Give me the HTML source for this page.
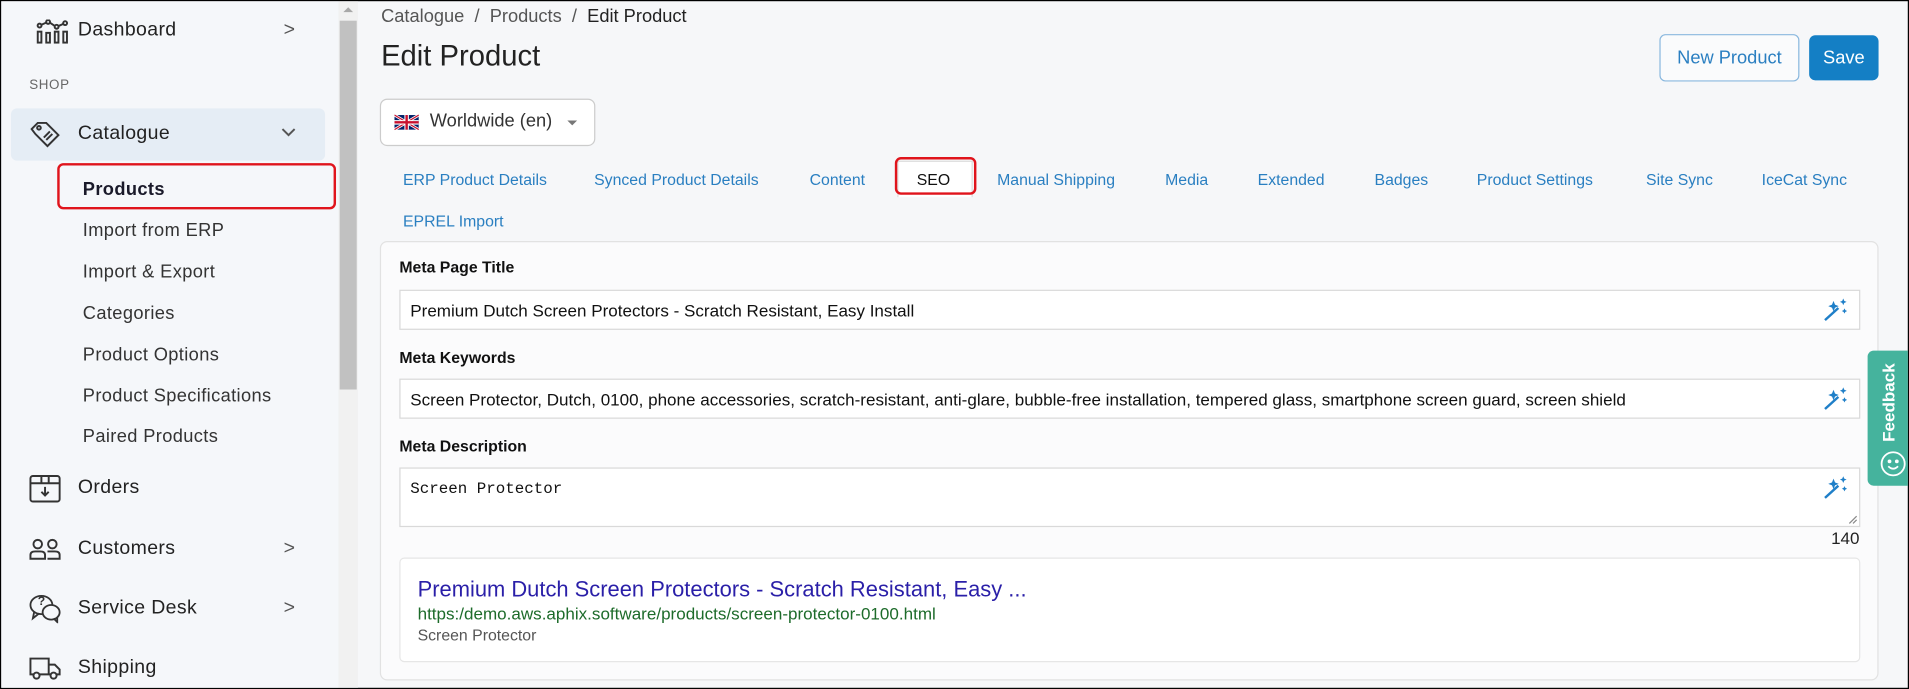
<!DOCTYPE html>
<html><head><meta charset="utf-8"><style>
*{box-sizing:border-box;margin:0;padding:0}
html,body{width:1909px;height:689px;overflow:hidden;background:#f6f7f9}
#w{position:absolute;left:0;top:0;width:1568px;height:566px;transform:scale(1.21747,1.2173);transform-origin:0 0;font-family:"Liberation Sans",sans-serif;background:#f6f7f9;border:1px solid #000;overflow:hidden}
.a{position:absolute;white-space:nowrap}
.side{position:absolute;left:0;top:0;width:277px;height:566px;background:#f5f7fa}
.nav{font-size:16px;color:#222;letter-spacing:.3px}
.sub{font-size:15px;color:#333;left:67px;letter-spacing:.3px}
.chev{font-size:16px;color:#555}
.tab{font-size:13px;color:#2a7fc1;top:139px}
.lbl{font-size:13px;font-weight:bold;color:#111;left:327px}
.inp{position:absolute;left:327px;width:1200px;background:#fff;border:1px solid #d9d9d9}
.inp span{position:absolute;left:8px;font-size:14px;color:#111;white-space:nowrap}
.wand{position:absolute;right:8px;top:6px}
</style></head><body><div id="w">
<div class="side"></div>
<div class="a" style="left:277px;top:0;width:16px;height:566px;background:#f1f1f1"></div>
<div class="a" style="left:278px;top:16px;width:14px;height:303px;background:#c1c1c1"></div>
<div class="a" style="left:281px;top:5px;width:0;height:0;border-left:4px solid transparent;border-right:4px solid transparent;border-bottom:4px solid #a8a8a8"></div>

<svg class="a" style="left:29px;top:15px" width="26" height="20" viewBox="0 0 26 20" fill="none" stroke="#333" stroke-width="1.6"><rect x="1" y="10" width="3" height="9"/><rect x="8" y="11" width="3" height="8"/><rect x="15" y="10" width="3" height="9"/><rect x="22" y="10" width="3" height="9"/><circle cx="2.5" cy="5" r="1.6"/><circle cx="9.5" cy="2" r="1.6"/><circle cx="16.5" cy="6" r="1.6"/><circle cx="23.5" cy="3" r="1.6"/><path d="M4 4.3L8 2.6M11 2.6L15 5.3M18 5.4L22 3.6"/></svg>
<div class="a nav" style="left:63px;top:15px">Dashboard</div>
<div class="a chev" style="left:232px;top:15px">&gt;</div>
<div class="a" style="left:23px;top:63px;font-size:11px;color:#666;letter-spacing:.5px">SHOP</div>
<div class="a" style="left:8px;top:88px;width:258px;height:43px;background:#e5edf5;border-radius:5px"></div>
<svg class="a" style="left:23px;top:99px" width="26" height="22" viewBox="0 0 26 22" fill="none" stroke="#333" stroke-width="1.6"><path d="M2 6L7 1H14L24 11L15 20L5 10L2 6Z"/><circle cx="8" cy="5" r="1.5"/><path d="M12 13L17 8M14 15L19 10"/></svg>
<div class="a nav" style="left:63px;top:100px">Catalogue</div>
<svg class="a" style="left:230px;top:104px" width="12" height="8" viewBox="0 0 12 8" fill="none" stroke="#555" stroke-width="1.6"><path d="M1 1L6 6L11 1"/></svg>
<div class="a" style="left:46px;top:133px;width:229px;height:38px;border:2px solid #e0141c;border-radius:5px"></div>
<div class="a sub" style="top:146px;font-weight:bold;color:#1a1a2a">Products</div>
<div class="a sub" style="top:180px">Import from ERP</div>
<div class="a sub" style="top:214px">Import &amp; Export</div>
<div class="a sub" style="top:248px">Categories</div>
<div class="a sub" style="top:282px">Product Options</div>
<div class="a sub" style="top:316px">Product Specifications</div>
<div class="a sub" style="top:349px">Paired Products</div>
<svg class="a" style="left:23px;top:389px" width="26" height="24" viewBox="0 0 26 24" fill="none" stroke="#333" stroke-width="1.6"><rect x="1" y="1" width="24" height="21" rx="2"/><path d="M1 7H25M10 1V7M16 1V7M13 10V17M10 14L13 17L16 14"/></svg>
<div class="a nav" style="left:63px;top:391px">Orders</div>
<svg class="a" style="left:23px;top:441px" width="26" height="18" viewBox="0 0 26 18" fill="none" stroke="#333" stroke-width="1.6"><circle cx="7" cy="5" r="3.5"/><circle cx="19" cy="5" r="3.5"/><path d="M1 17V14Q1 11 5 11H9Q13 11 13 14V17ZM15 11H21Q25 11 25 14V17H15"/></svg>
<div class="a nav" style="left:63px;top:441px">Customers</div>
<div class="a chev" style="left:232px;top:441px">&gt;</div>
<svg class="a" style="left:23px;top:487px" width="26" height="24" viewBox="0 0 26 24" fill="none" stroke="#333" stroke-width="1.5"><ellipse cx="10" cy="9" rx="9" ry="7.5"/><path d="M4 15L3 20L8 16"/><ellipse cx="18" cy="15" rx="7" ry="6" fill="#f5f7fa"/><path d="M20 20L23 23V19"/></svg>
<div class="a" style="left:30px;top:488px;font-size:10px;font-weight:bold;color:#333">?</div>
<div class="a nav" style="left:63px;top:490px">Service Desk</div>
<div class="a chev" style="left:232px;top:490px">&gt;</div>
<svg class="a" style="left:23px;top:538px" width="26" height="20" viewBox="0 0 26 20" fill="none" stroke="#333" stroke-width="1.6"><path d="M1 2H16V15H1ZM16 7H21L25 11V15H16"/><circle cx="6" cy="16" r="2.5" fill="#f5f7fa"/><circle cx="20" cy="16" r="2.5" fill="#f5f7fa"/></svg>
<div class="a nav" style="left:63px;top:539px">Shipping</div>

<div class="a" style="left:312px;top:4px;font-size:15px;color:#555">Catalogue &nbsp;/&nbsp; Products &nbsp;/&nbsp; <span style="color:#222">Edit Product</span></div>
<div class="a" style="left:312px;top:32px;font-size:24px;color:#222">Edit Product</div>
<div class="a" style="left:1362px;top:27px;width:115px;height:39px;border:1px solid #8ab8de;border-radius:5px;background:#fafbfc;color:#2a7fc1;font-size:15px;text-align:center;line-height:37px">New Product</div>
<div class="a" style="left:1485px;top:28px;width:57px;height:37px;border-radius:5px;background:#147fc5;color:#fff;font-size:15px;text-align:center;line-height:37px">Save</div>

<div class="a" style="left:311px;top:80px;width:177px;height:39px;border:1px solid #ccc;border-radius:6px;background:#fff"></div>
<svg class="a" style="left:323px;top:93px" width="20" height="13" viewBox="0 0 60 36"><rect width="60" height="36" fill="#012169"/><path d="M0 0L60 36M60 0L0 36" stroke="#fff" stroke-width="7"/><path d="M0 0L60 36M60 0L0 36" stroke="#c8102e" stroke-width="3"/><path d="M30 0V36M0 18H60" stroke="#fff" stroke-width="11"/><path d="M30 0V36M0 18H60" stroke="#c8102e" stroke-width="6"/></svg>
<div class="a" style="left:352px;top:90px;font-size:15px;color:#333">Worldwide (en)</div>
<div class="a" style="left:465px;top:98px;border-left:4px solid transparent;border-right:4px solid transparent;border-top:4px solid #777"></div>

<div class="a tab" style="left:330px">ERP Product Details</div>
<div class="a tab" style="left:487px">Synced Product Details</div>
<div class="a tab" style="left:664px">Content</div>
<div class="a" style="left:736px;top:131px;width:62px;height:30px;border:1px solid #ddd;border-bottom:none;background:#fff"></div>
<div class="a tab" style="left:752px;color:#111">SEO</div>
<div class="a" style="left:734px;top:128px;width:67px;height:31px;border:2px solid #e0141c;border-radius:5px"></div>
<div class="a tab" style="left:818px">Manual Shipping</div>
<div class="a tab" style="left:956px">Media</div>
<div class="a tab" style="left:1032px">Extended</div>
<div class="a tab" style="left:1128px">Badges</div>
<div class="a tab" style="left:1212px">Product Settings</div>
<div class="a tab" style="left:1351px">Site Sync</div>
<div class="a tab" style="left:1446px">IceCat Sync</div>
<div class="a tab" style="left:330px;top:173px">EPREL Import</div>

<div class="a" style="left:311px;top:197px;width:1231px;height:361px;background:#fbfbfc;border:1px solid #e2e2e2;border-radius:6px"></div>
<div class="a lbl" style="top:211px">Meta Page Title</div>
<div class="inp" style="top:237px;height:33px"><span style="top:8px">Premium Dutch Screen Protectors - Scratch Resistant, Easy Install</span><svg class="wand" width="22" height="20" viewBox="0 0 22 20" fill="none" stroke="#1f7fc8" stroke-width="2"><path d="M2 18L13 8"/><path d="M9 3L10 5.5L12.5 6.5L10 7.5L9 10L8 7.5L5.5 6.5L8 5.5Z M17 1L17.6 2.4L19 3L17.6 3.6L17 5L16.4 3.6L15 3L16.4 2.4Z M18 9L18.5 10L19.5 10.5L18.5 11L18 12L17.5 11L16.5 10.5L17.5 10Z" fill="#1f7fc8" stroke-width="0.6"/></svg></div>
<div class="a lbl" style="top:285px">Meta Keywords</div>
<div class="inp" style="top:310px;height:33px"><span style="top:8px">Screen Protector, Dutch, 0100, phone accessories, scratch-resistant, anti-glare, bubble-free installation, tempered glass, smartphone screen guard, screen shield</span><svg class="wand" width="22" height="20" viewBox="0 0 22 20" fill="none" stroke="#1f7fc8" stroke-width="2"><path d="M2 18L13 8"/><path d="M9 3L10 5.5L12.5 6.5L10 7.5L9 10L8 7.5L5.5 6.5L8 5.5Z M17 1L17.6 2.4L19 3L17.6 3.6L17 5L16.4 3.6L15 3L16.4 2.4Z M18 9L18.5 10L19.5 10.5L18.5 11L18 12L17.5 11L16.5 10.5L17.5 10Z" fill="#1f7fc8" stroke-width="0.6"/></svg></div>
<div class="a lbl" style="top:358px">Meta Description</div>
<div class="inp" style="top:383px;height:49px"><span style="top:9px;font-family:'Liberation Mono',monospace;font-size:13px">Screen Protector</span><svg class="wand" width="22" height="20" viewBox="0 0 22 20" fill="none" stroke="#1f7fc8" stroke-width="2"><path d="M2 18L13 8"/><path d="M9 3L10 5.5L12.5 6.5L10 7.5L9 10L8 7.5L5.5 6.5L8 5.5Z M17 1L17.6 2.4L19 3L17.6 3.6L17 5L16.4 3.6L15 3L16.4 2.4Z M18 9L18.5 10L19.5 10.5L18.5 11L18 12L17.5 11L16.5 10.5L17.5 10Z" fill="#1f7fc8" stroke-width="0.6"/></svg><svg style="position:absolute;right:1px;bottom:1px" width="8" height="8" viewBox="0 0 8 8" stroke="#888"><path d="M1 7L7 1M4 7L7 4"/></svg></div>
<div class="a" style="left:1503px;top:433px;font-size:14px;color:#222">140</div>
<div class="a" style="left:327px;top:457px;width:1200px;height:86px;background:#fff;border:1px solid #e6e6e6;border-radius:4px"></div>
<div class="a" style="left:342px;top:473px;font-size:18px;color:#2a1fa8">Premium Dutch Screen Protectors - Scratch Resistant, Easy ...</div>
<div class="a" style="left:342px;top:495px;font-size:14px;color:#1d6b2a">https:/demo.aws.aphix.software/products/screen-protector-0100.html</div>
<div class="a" style="left:342px;top:513px;font-size:13px;color:#555">Screen Protector</div>

<div class="a" style="left:1533px;top:287px;width:36px;height:111px;background:#45b39d;border-radius:5px 0 0 5px"></div>
<div class="a" style="left:1542px;top:362px;font-size:14px;font-weight:bold;color:#fff;transform:rotate(-90deg);transform-origin:0 0">Feedback</div>
<svg class="a" style="left:1543px;top:369px" width="22" height="22" viewBox="0 0 22 22" fill="none" stroke="#fff" stroke-width="1.5"><circle cx="11" cy="11" r="9.5"/><circle cx="8" cy="9" r=".8" fill="#fff"/><circle cx="14" cy="9" r=".8" fill="#fff"/><path d="M7 13Q11 17 15 13"/></svg>
</div></body></html>
